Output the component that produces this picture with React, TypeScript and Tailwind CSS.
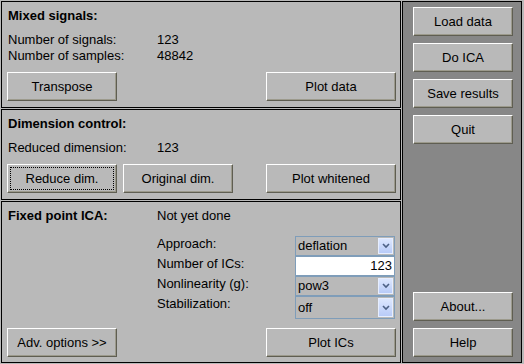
import type { ReactNode } from 'react'

function Btn({ children, w, focus }: { children: ReactNode; w: string; focus?: boolean }) {
  return (
    <button
      className={`relative ${w} h-[29px] shrink-0 bg-[#b9b9b9] border border-t-white border-l-white border-r-[#5f5e52] border-b-[#5f5e52] shadow-[inset_-1px_-1px_0_#9c9a8c] text-[13px] leading-[16px] text-black`}
    >
      {focus && <span className="absolute inset-[2px] border border-dotted border-black" />}
      {children}
    </button>
  )
}

function Arrow() {
  return (
    <div className="my-px mr-px w-[15px] bg-linear-to-b from-[#dde7fe] to-[#b8cbf8] border border-[#e6eeff] flex items-center justify-center">
      <svg width="8" height="6" viewBox="0 0 8 6">
        <path d="M1 1 L4 4 L7 1" stroke="#4d6185" strokeWidth="1.6" fill="none" />
      </svg>
    </div>
  )
}

function Combo({ value, h }: { value: string; h: string }) {
  return (
    <div className={`w-[100px] ${h} border border-[#7f9db9] flex`}>
      <div className="flex-1 pl-[2px] flex items-center leading-[16px]">{value}</div>
      <Arrow />
    </div>
  )
}

export default function App() {
  return (
    <div
      className="w-[524px] h-[364px] bg-[#b9b9b9] p-px flex gap-px text-[13px] text-black"
      style={{ fontFamily: '"Liberation Sans", Arial, sans-serif' }}
    >
      <div className="w-[400px] flex flex-col gap-px">
        {/* mixed signals */}
        <div className="h-[107px] border border-black flex flex-col pt-[6px] pb-[6px] pl-[5px] pr-[4px]">
          <div className="ml-px font-bold leading-[16px]">Mixed signals:</div>
          <div className="mt-[8px] ml-px grid grid-cols-[149px_1fr] leading-[16px]">
            <span>Number of signals:</span>
            <span>123</span>
            <span>Number of samples:</span>
            <span>48842</span>
          </div>
          <div className="mt-auto flex justify-between">
            <Btn w="w-[110px]">Transpose</Btn>
            <Btn w="w-[130px]">Plot data</Btn>
          </div>
        </div>

        {/* dimension control */}
        <div className="h-[91px] border border-black flex flex-col pt-[6px] pb-[6px] pl-[5px] pr-[4px]">
          <div className="ml-px font-bold leading-[16px]">Dimension control:</div>
          <div className="mt-[8px] ml-px grid grid-cols-[149px_1fr] leading-[16px]">
            <span>Reduced dimension:</span>
            <span>123</span>
          </div>
          <div className="mt-auto flex">
            <Btn w="w-[110px]" focus>
              Reduce dim.
            </Btn>
            <div className="ml-[6px]">
              <Btn w="w-[110px]">Original dim.</Btn>
            </div>
            <div className="ml-auto">
              <Btn w="w-[130px]">Plot whitened</Btn>
            </div>
          </div>
        </div>

        {/* fixed point ICA */}
        <div className="h-[162px] border border-black flex flex-col pt-[6px] pb-[5px] pl-[5px] pr-[4px]">
          <div className="ml-px grid grid-cols-[149px_1fr] leading-[16px]">
            <span className="font-bold">Fixed point ICA:</span>
            <span>Not yet done</span>
          </div>
          <div className="mt-[12px] ml-[150px] flex flex-col leading-[16px]">
            <div className="flex">
              <span className="w-[138px]">Approach:</span>
              <Combo value="deflation" h="h-[20px]" />
            </div>
            <div className="flex">
              <span className="w-[138px]">Number of ICs:</span>
              <div className="w-[100px] h-[20px] border border-[#7f9db9] bg-white flex items-center justify-end pr-[2px]">
                123
              </div>
            </div>
            <div className="flex">
              <span className="w-[138px]">Nonlinearity (g):</span>
              <Combo value="pow3" h="h-[20px]" />
            </div>
            <div className="flex">
              <span className="w-[138px]">Stabilization:</span>
              <Combo value="off" h="h-[23px]" />
            </div>
          </div>
          <div className="mt-auto flex justify-between">
            <Btn w="w-[110px]">Adv. options &gt;&gt;</Btn>
            <Btn w="w-[130px]">Plot ICs</Btn>
          </div>
        </div>
      </div>

      {/* side menu */}
      <div className="w-[120px] h-[362px] border border-black bg-[#878787] flex flex-col gap-[7px] pt-[5px] pb-[5px] pl-[10px]">
        <Btn w="w-[100px]">Load data</Btn>
        <Btn w="w-[100px]">Do ICA</Btn>
        <Btn w="w-[100px]">Save results</Btn>
        <Btn w="w-[100px]">Quit</Btn>
        <div className="mt-auto">
          <Btn w="w-[100px]">About...</Btn>
        </div>
        <Btn w="w-[100px]">Help</Btn>
      </div>
    </div>
  )
}
